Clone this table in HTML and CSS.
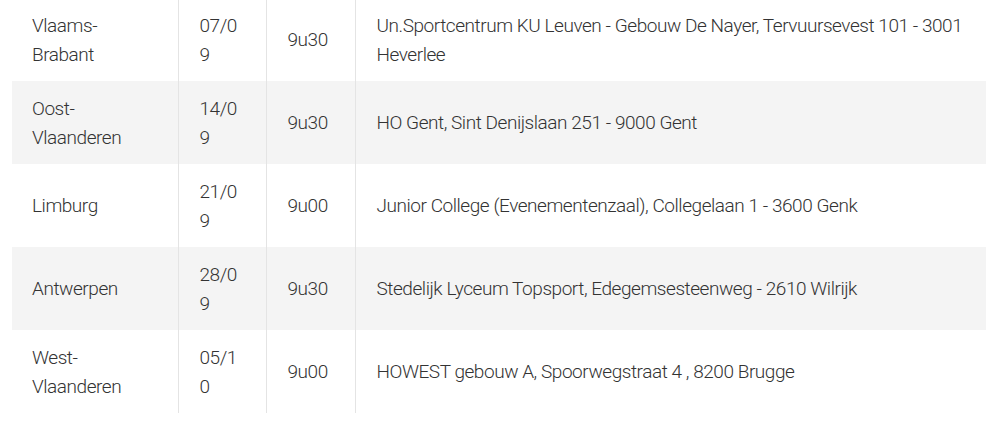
FILE: index.html
```html
<!DOCTYPE html>
<html lang="nl">
<head>
<meta charset="utf-8">
<link rel="stylesheet" href="styles.css">
</head>
<body>
<table class="schedule">
  <colgroup>
    <col class="c-prov"><col class="c-date"><col class="c-time"><col class="c-place">
  </colgroup>
  <tbody>
    <tr>
      <td>Vlaams-Brabant</td><td class="date">07/09</td><td>9u30</td>
      <td>Un.Sportcentrum KU Leuven - Gebouw De Nayer, Tervuursevest 101 - 3001 Heverlee</td>
    </tr>
    <tr class="alt">
      <td>Oost-Vlaanderen</td><td class="date">14/09</td><td>9u30</td>
      <td>HO Gent, Sint Denijslaan 251 - 9000 Gent</td>
    </tr>
    <tr>
      <td>Limburg</td><td class="date">21/09</td><td>9u00</td>
      <td>Junior College (Evenementenzaal), Collegelaan 1 - 3600 Genk</td>
    </tr>
    <tr class="alt">
      <td>Antwerpen</td><td class="date">28/09</td><td>9u30</td>
      <td>Stedelijk Lyceum Topsport, Edegemsesteenweg - 2610 Wilrijk</td>
    </tr>
    <tr>
      <td>West-Vlaanderen</td><td class="date">05/10</td><td>9u00</td>
      <td>HOWEST gebouw A, Spoorwegstraat 4 , 8200 Brugge</td>
    </tr>
  </tbody>
</table>
</body>
</html>
```
FILE: styles.css
```css
html, body {
  margin: 0;
  padding: 0;
  background: #fff;
}
body {
  font-family: Roboto, "Liberation Sans", sans-serif;
  font-weight: 300;
  font-size: 19px;
  letter-spacing: -0.45px;
  line-height: 29px;
  color: #333;
  overflow: hidden;
}
.schedule {
  margin: -2px 0 0 12px;
  width: 974px;
  table-layout: fixed;
  border-collapse: collapse;
}
.c-prov { width: 166px; }
.c-date { width: 88px; }
.c-time { width: 89px; }
.c-place { width: 631px; }
.schedule td {
  padding: 12.5px 20px 12.5px 21px;
  vertical-align: middle;
  border-left: 1px solid #e4e4e4;
}
.schedule td:first-child {
  border-left: none;
  padding-left: 20px;
}
.schedule td.date {
  word-break: break-all;
}
.schedule tr.alt td {
  background: #f4f4f4;
}
```
